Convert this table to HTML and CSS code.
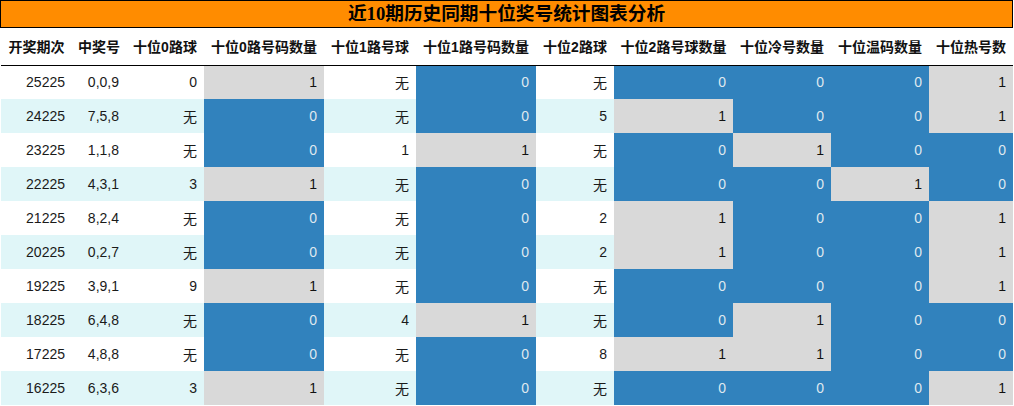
FILE: index.html
```html
<!DOCTYPE html>
<html lang="zh">
<head>
<meta charset="utf-8">
<title>近10期历史同期十位奖号统计图表分析</title>
<link rel="stylesheet" href="styles.css">
</head>
<body>
<div class="wrap">
  <div class="title">近10期历史同期十位奖号统计图表分析</div>
  <table class="stats">
    <colgroup>
      <col class="w72"><col class="w54"><col class="w78"><col class="w120"><col class="w92"><col class="w120"><col class="w78"><col class="w119"><col class="w98"><col class="w98"><col class="w84">
    </colgroup>
    <thead>
      <tr>
        <th>开奖期次</th><th>中奖号</th><th>十位0路球</th><th>十位0路号码数量</th><th>十位1路号球</th><th>十位1路号码数量</th><th>十位2路球</th><th>十位2路号球数量</th><th>十位冷号数量</th><th>十位温码数量</th><th class="clip">十位热号数</th>
      </tr>
    </thead>
    <tbody>
      <tr><td>25225</td><td>0,0,9</td><td>0</td><td class="g">1</td><td>无</td><td class="b">0</td><td>无</td><td class="b">0</td><td class="b">0</td><td class="b">0</td><td class="g">1</td></tr>
      <tr><td>24225</td><td>7,5,8</td><td>无</td><td class="b">0</td><td>无</td><td class="b">0</td><td>5</td><td class="g">1</td><td class="b">0</td><td class="b">0</td><td class="g">1</td></tr>
      <tr><td>23225</td><td>1,1,8</td><td>无</td><td class="b">0</td><td>1</td><td class="g">1</td><td>无</td><td class="b">0</td><td class="g">1</td><td class="b">0</td><td class="b">0</td></tr>
      <tr><td>22225</td><td>4,3,1</td><td>3</td><td class="g">1</td><td>无</td><td class="b">0</td><td>无</td><td class="b">0</td><td class="b">0</td><td class="g">1</td><td class="b">0</td></tr>
      <tr><td>21225</td><td>8,2,4</td><td>无</td><td class="b">0</td><td>无</td><td class="b">0</td><td>2</td><td class="g">1</td><td class="b">0</td><td class="b">0</td><td class="g">1</td></tr>
      <tr><td>20225</td><td>0,2,7</td><td>无</td><td class="b">0</td><td>无</td><td class="b">0</td><td>2</td><td class="g">1</td><td class="b">0</td><td class="b">0</td><td class="g">1</td></tr>
      <tr><td>19225</td><td>3,9,1</td><td>9</td><td class="g">1</td><td>无</td><td class="b">0</td><td>无</td><td class="b">0</td><td class="b">0</td><td class="b">0</td><td class="g">1</td></tr>
      <tr><td>18225</td><td>6,4,8</td><td>无</td><td class="b">0</td><td>4</td><td class="g">1</td><td>无</td><td class="b">0</td><td class="g">1</td><td class="b">0</td><td class="b">0</td></tr>
      <tr><td>17225</td><td>4,8,8</td><td>无</td><td class="b">0</td><td>无</td><td class="b">0</td><td>8</td><td class="g">1</td><td class="g">1</td><td class="b">0</td><td class="b">0</td></tr>
      <tr><td>16225</td><td>6,3,6</td><td>3</td><td class="g">1</td><td>无</td><td class="b">0</td><td>无</td><td class="b">0</td><td class="b">0</td><td class="b">0</td><td class="g">1</td></tr>
    </tbody>
  </table>
</div>
</body>
</html>
```

FILE: styles.css
```css
* { box-sizing: border-box; }
html, body { margin: 0; padding: 0; background: #fff; }
.wrap { width: 1013px; }
.title {
  height: 28px;
  border: 1px solid #000;
  background: #ff8c00;
  color: #000;
  text-align: center;
  font-family: "Liberation Serif", "Noto Sans CJK SC", serif;
  font-weight: bold;
  font-size: 18.67px;
  line-height: 25px;
}
.stats {
  width: 1012px;
  margin-left: 1px;
  border-collapse: collapse;
  border-spacing: 0;
  table-layout: fixed;
  font-family: "Liberation Sans", "Noto Sans CJK SC", sans-serif;
  font-size: 14px;
  color: #1a1a1a;
}
.w72 { width: 71px; }
.w54 { width: 54px; }
.w78 { width: 78px; }
.w120 { width: 120px; }
.w92 { width: 92px; }
.w119 { width: 119px; }
.w98 { width: 98px; }
.w84 { width: 84px; }
.stats th {
  height: 37px;
  padding: 0 4px;
  font-weight: bold;
  text-align: center;
  white-space: nowrap;
  color: #111;
  border-bottom: 1px solid #000;
  vertical-align: middle;
}
.stats th.clip { overflow: hidden; }
.stats td {
  height: 34px;
  padding: 0 7px 0 4px;
  text-align: right;
  vertical-align: middle;
  white-space: nowrap;
}
.stats tbody tr:nth-child(even) td { background: #e0f6f8; }
.stats tbody tr td.g, .stats tbody tr:nth-child(even) td.g { background: #d9d9d9; color: #111; }
.stats tbody tr td.b, .stats tbody tr:nth-child(even) td.b { background: #3182bd; color: #dfe8ef; }
```
